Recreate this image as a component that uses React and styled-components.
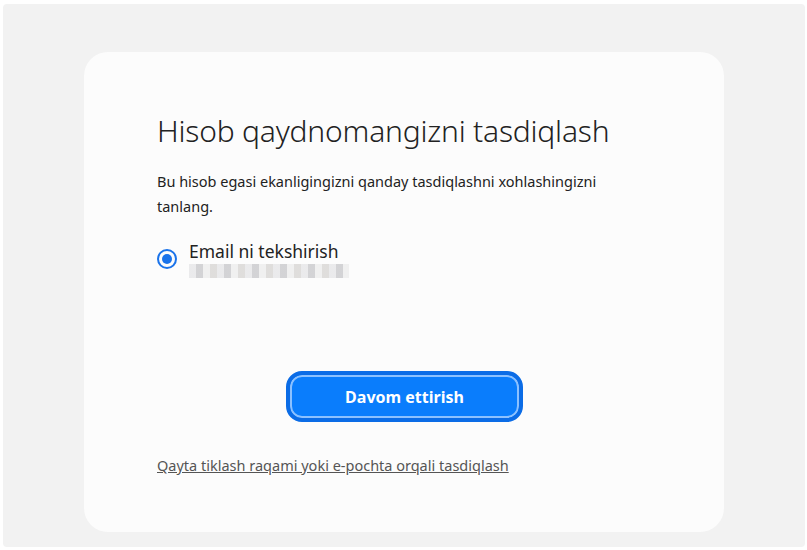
import React from "react";
import styled, { createGlobalStyle } from "styled-components";

const Global = createGlobalStyle`
  html, body { margin: 0; background: #fff; }
  body { font-family: "Noto Sans", "Open Sans", sans-serif; }
`;

const Page = styled.div`
  margin: 4px 2px 3px 3px;
  height: 543px;
  background: #f2f2f2;
  border-radius: 4px;
  padding: 48px 81px 0 81px;
  box-sizing: border-box;
`;

const Card = styled.div`
  height: 480px;
  background: #fcfcfc;
  border-radius: 24px;
  padding: 58px 72px 0 73px;
  box-sizing: border-box;
  display: flex;
  flex-direction: column;
`;

const Title = styled.h1`
  margin: 0;
  font-size: 30px;
  font-weight: 300;
  color: #222;
  letter-spacing: -0.2px;
`;

const Text = styled.p`
  margin: 18px 0 0;
  font-size: 14.5px;
  line-height: 25px;
  color: #222;
  width: 470px;
`;

const Option = styled.label`
  display: flex;
  align-items: center;
  gap: 12px;
  margin-top: 21px;
`;

const Radio = styled.span`
  width: 20px;
  height: 20px;
  border-radius: 50%;
  border: 2.5px solid #1a73ea;
  box-sizing: border-box;
  display: flex;
  align-items: center;
  justify-content: center;
  &::after {
    content: "";
    width: 10px;
    height: 10px;
    border-radius: 50%;
    background: #1a73ea;
  }
`;

const OptionLabel = styled.div`
  font-size: 17.5px;
  color: #222;
  line-height: 22px;
`;

const Blur = styled.div`
  width: 160px;
  height: 14px;
  margin-top: 2px;
  background: repeating-linear-gradient(
    90deg,
    #e6e6e8 0 7px,
    #c9c9cc 7px 14px,
    #ededed 14px 21px,
    #d8d6d4 21px 28px
  );
  opacity: 0.8;
`;

const ButtonRow = styled.div`
  display: flex;
  justify-content: center;
  margin-top: 93px;
`;

const Button = styled.button`
  width: 237px;
  height: 51px;
  border-radius: 16px;
  border: 4px solid #0b6ce6;
  background: #0a7dfc;
  box-shadow: inset 0 0 0 2px #8cc1ff;
  color: #fff;
  font-family: inherit;
  font-size: 16px;
  font-weight: 700;
`;

const Link = styled.a`
  margin-top: 33px;
  font-size: 14.5px;
  color: #555;
  text-decoration: underline;
`;

export default function App() {
  return (
    <>
      <Global />
      <Page>
        <Card>
          <Title>Hisob qaydnomangizni tasdiqlash</Title>
          <Text>Bu hisob egasi ekanligingizni qanday tasdiqlashni xohlashingizni tanlang.</Text>
          <Option>
            <Radio />
            <div>
              <OptionLabel>Email ni tekshirish</OptionLabel>
              <Blur />
            </div>
          </Option>
          <ButtonRow>
            <Button>Davom ettirish</Button>
          </ButtonRow>
          <Link href="#">Qayta tiklash raqami yoki e-pochta orqali tasdiqlash</Link>
        </Card>
      </Page>
    </>
  );
}
